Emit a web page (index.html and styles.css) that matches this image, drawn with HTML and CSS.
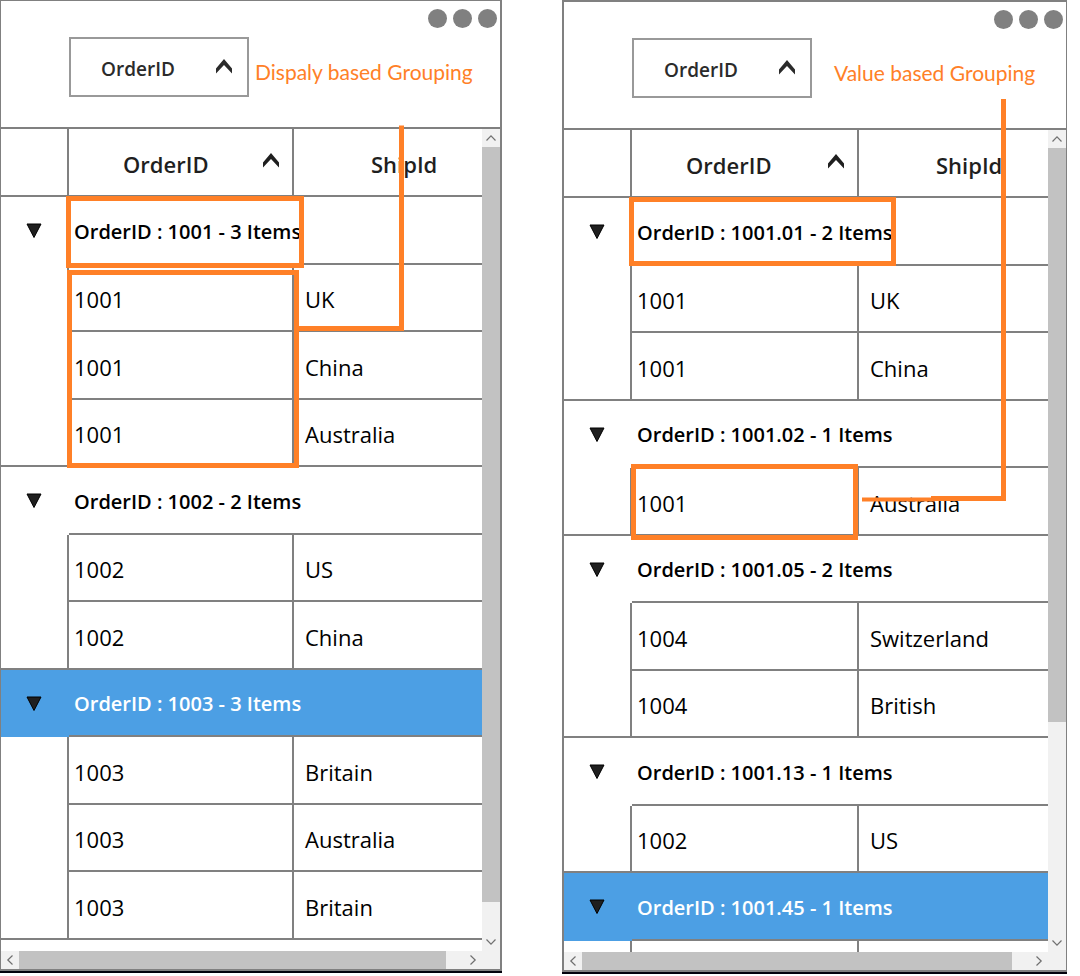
FILE: index.html
```html
<!DOCTYPE html>
<html lang="en">
<head>
<meta charset="utf-8">
<title>Grouping modes</title>
<link rel="stylesheet" href="styles.css">
</head>
<body>
<svg class="defs" aria-hidden="true">
  <symbol id="sort" viewBox="0 0 18 15"><path d="M9 0 17 9.500V14.500L9 6 1 14.500V9.500Z" fill="currentColor"/></symbol>
  <symbol id="expanded" viewBox="0 0 16 16"><path d="M1 1H15L8 14.500Z" fill="currentColor" stroke="#000" stroke-width="1"/></symbol>
  <symbol id="arrow" viewBox="0 0 18 18"><path d="M4.500 11.500 9 6.800 13.500 11.500" fill="none" stroke="#707070" stroke-width="1.200"/></symbol>
</svg>
<main class="page">
  <section class="panel panel-display">
    <header class="group-area">
      <button class="chip" type="button">OrderID<svg class="sort-icon"><use href="#sort"/></svg></button>
      <p class="caption">Dispaly based Grouping</p>
      <button class="more" type="button" aria-label="More"><span class="dot"></span><span class="dot"></span><span class="dot"></span></button>
    </header>
    <div class="viewport">
      <table class="grid">
        <thead>
          <tr><th class="gutter"></th><th class="key"><button class="sorter" type="button">OrderID<svg class="sort-icon"><use href="#sort"/></svg></button></th><th class="ship">ShipId</th></tr>
        </thead>
        <tbody>
          <tr class="group"><td><button class="expander" type="button" aria-label="Collapse"><svg class="expand-icon"><use href="#expanded"/></svg></button></td><td colspan="2">OrderID : 1001 - 3 Items</td></tr>
          <tr><td></td><td>1001</td><td>UK</td></tr>
          <tr><td></td><td>1001</td><td>China</td></tr>
          <tr class="last"><td></td><td>1001</td><td>Australia</td></tr>
          <tr class="group"><td><button class="expander" type="button" aria-label="Collapse"><svg class="expand-icon"><use href="#expanded"/></svg></button></td><td colspan="2">OrderID : 1002 - 2 Items</td></tr>
          <tr><td></td><td>1002</td><td>US</td></tr>
          <tr class="last"><td></td><td>1002</td><td>China</td></tr>
          <tr class="group selected"><td><button class="expander" type="button" aria-label="Collapse"><svg class="expand-icon"><use href="#expanded"/></svg></button></td><td colspan="2">OrderID : 1003 - 3 Items</td></tr>
          <tr><td></td><td>1003</td><td>Britain</td></tr>
          <tr><td></td><td>1003</td><td>Australia</td></tr>
          <tr class="last"><td></td><td>1003</td><td>Britain</td></tr>
        </tbody>
      </table>
    </div>
    <div class="bar bar-y">
      <button class="step" type="button" aria-label="Scroll up"><svg class="arrow"><use href="#arrow"/></svg></button>
      <div class="track"><div class="thumb" style="height: 96%"></div></div>
      <button class="step" type="button" aria-label="Scroll down"><svg class="arrow down"><use href="#arrow"/></svg></button>
    </div>
    <div class="bar bar-x">
      <button class="step" type="button" aria-label="Scroll left"><svg class="arrow left"><use href="#arrow"/></svg></button>
      <div class="track"><div class="thumb" style="width: 96%"></div></div>
      <button class="step" type="button" aria-label="Scroll right"><svg class="arrow right"><use href="#arrow"/></svg></button>
    </div>
    <div class="corner"></div>
    <svg class="marks" viewBox="0 0 500 520" width="500" height="520" aria-hidden="true">
      <rect x="67.500" y="197.500" width="233" height="67"/>
      <rect x="68.500" y="271.500" width="227" height="193"/>
      <path d="M400.500 124.500V327.500H295.500"/>
    </svg>
  </section>
  <section class="panel panel-value">
    <header class="group-area">
      <button class="chip" type="button">OrderID<svg class="sort-icon"><use href="#sort"/></svg></button>
      <p class="caption">Value based Grouping</p>
      <button class="more" type="button" aria-label="More"><span class="dot"></span><span class="dot"></span><span class="dot"></span></button>
    </header>
    <div class="viewport">
      <table class="grid">
        <thead>
          <tr><th class="gutter"></th><th class="key"><button class="sorter" type="button">OrderID<svg class="sort-icon"><use href="#sort"/></svg></button></th><th class="ship">ShipId</th></tr>
        </thead>
        <tbody>
          <tr class="group"><td><button class="expander" type="button" aria-label="Collapse"><svg class="expand-icon"><use href="#expanded"/></svg></button></td><td colspan="2">OrderID : 1001.01 - 2 Items</td></tr>
          <tr><td></td><td>1001</td><td>UK</td></tr>
          <tr class="last"><td></td><td>1001</td><td>China</td></tr>
          <tr class="group"><td><button class="expander" type="button" aria-label="Collapse"><svg class="expand-icon"><use href="#expanded"/></svg></button></td><td colspan="2">OrderID : 1001.02 - 1 Items</td></tr>
          <tr class="last"><td></td><td>1001</td><td>Australia</td></tr>
          <tr class="group"><td><button class="expander" type="button" aria-label="Collapse"><svg class="expand-icon"><use href="#expanded"/></svg></button></td><td colspan="2">OrderID : 1001.05 - 2 Items</td></tr>
          <tr><td></td><td>1004</td><td>Switzerland</td></tr>
          <tr class="last"><td></td><td>1004</td><td>British</td></tr>
          <tr class="group"><td><button class="expander" type="button" aria-label="Collapse"><svg class="expand-icon"><use href="#expanded"/></svg></button></td><td colspan="2">OrderID : 1001.13 - 1 Items</td></tr>
          <tr class="last"><td></td><td>1002</td><td>US</td></tr>
          <tr class="group selected"><td><button class="expander" type="button" aria-label="Collapse"><svg class="expand-icon"><use href="#expanded"/></svg></button></td><td colspan="2">OrderID : 1001.45 - 1 Items</td></tr>
          <tr class="last"><td></td><td></td><td></td></tr>
        </tbody>
      </table>
    </div>
    <div class="bar bar-y">
      <button class="step" type="button" aria-label="Scroll up"><svg class="arrow"><use href="#arrow"/></svg></button>
      <div class="track"><div class="thumb" style="height: 73%"></div></div>
      <button class="step" type="button" aria-label="Scroll down"><svg class="arrow down"><use href="#arrow"/></svg></button>
    </div>
    <div class="bar bar-x">
      <button class="step" type="button" aria-label="Scroll left"><svg class="arrow left"><use href="#arrow"/></svg></button>
      <div class="track"><div class="thumb" style="width: 96%"></div></div>
      <button class="step" type="button" aria-label="Scroll right"><svg class="arrow right"><use href="#arrow"/></svg></button>
    </div>
    <div class="corner"></div>
    <svg class="marks" viewBox="0 0 500 560" width="500" height="560" aria-hidden="true">
      <rect x="67.500" y="197.500" width="262" height="64"/>
      <rect x="69.500" y="464.500" width="222" height="71"/>
      <path d="M439.500 97V496.500H367"/>
      <path d="M298 497.500H371" stroke-width="4"/>
    </svg>
  </section>
</main>
</body>
</html>
```
FILE: styles.css
```css
* {
  box-sizing: border-box;
}

body {
  margin: 0;
  background: #fff;
  color: #000;
  font-family: "Open Sans", "Noto Sans", sans-serif;
  font-size: 22px;
  line-height: 30px;
}

button {
  padding: 0;
  border: 0;
  background: none;
  color: inherit;
  font: inherit;
}

svg {
  display: block;
}

.defs {
  display: none;
}

.page {
  display: grid;
  grid-template-columns: 502fr 505fr;
  grid-template-rows: minmax(0, 1fr);
  column-gap: 60px;
  height: 100vh;
  padding: 0 13px 4px 0;
}

.panel {
  position: relative;
  display: grid;
  grid-template-columns: minmax(0, 1fr) 18px;
  grid-template-rows: auto minmax(0, 1fr) 18px;
  border: solid #808080;
  box-shadow: 0 2px 0 #02020c;
}

.panel-display {
  margin-bottom: 1px;
  border-width: 1px 2px 2px 1px;
}

.panel-value {
  border-width: 2px 1px 2px 2px;
}

.group-area {
  grid-column: 1 / -1;
  display: flex;
  align-items: flex-start;
  height: 128px;
  border-bottom: 2px solid #808080;
}

.chip {
  display: flex;
  align-items: center;
  justify-content: space-between;
  width: 180px;
  height: 60px;
  margin: 36px 0 0 68px;
  padding: 4px 14px 0 30px;
  border: 2px solid #999;
  color: #2b2b2b;
  font-size: 19px;
  font-weight: 600;
}

.sort-icon {
  width: 18px;
  height: 15px;
  margin-bottom: 6px;
}

.caption {
  margin: 56px 0 0 6px;
  color: #ff8027;
  font-family: Lato, "Open Sans", sans-serif;
  font-size: 21px;
  white-space: nowrap;
}

.panel-value .caption {
  margin-left: 22px;
}

.more {
  position: absolute;
  top: 8px;
  right: 3px;
  display: flex;
  gap: 6px;
}

.dot {
  width: 19px;
  height: 19px;
  border-radius: 50%;
  background: #808080;
}

.viewport {
  overflow: hidden;
}

.grid {
  width: 100%;
  table-layout: fixed;
  border-collapse: separate;
  border-spacing: 0;
}

.grid th,
.grid td {
  padding: 3px 0 0 11px;
  border: 0 solid #808080;
  text-align: left;
  white-space: nowrap;
}

.grid th {
  height: 68px;
  border-bottom-width: 2px;
  color: #1f1f1f;
  font-weight: 600;
}

.grid .gutter {
  width: 68px;
  border-right-width: 2px;
}

.grid .key {
  width: 225px;
  padding-left: 54px;
  border-right-width: 2px;
}

.panel-value .grid .key {
  width: 227px;
}

.grid .ship {
  padding-left: 77px;
}

.sorter {
  display: flex;
  align-items: center;
  justify-content: space-between;
  width: 100%;
  padding-right: 12px;
}

.grid tbody tr {
  height: 67px;
}

.grid tbody tr:nth-child(odd) {
  height: 68px;
}

.grid td:nth-child(2) {
  padding-left: 5px;
  border-width: 0 2px 2px 0;
}

.grid td:nth-child(3) {
  border-bottom-width: 2px;
}

.grid td:first-child {
  padding: 0;
  border-right-width: 2px;
}

.grid .last td:first-child {
  border-bottom-width: 2px;
}

.grid .group td:first-child {
  border-right-width: 0;
}

.grid .group td:nth-child(2) {
  border-right-width: 0;
  font-size: 20px;
  font-weight: 600;
}

.grid .selected td {
  background: #4c9fe4;
  color: #fff;
}

.expander {
  display: block;
  margin-left: 25px;
  color: #1f1f1f;
}

.expand-icon {
  width: 16px;
  height: 16px;
}

.bar {
  display: flex;
  background: #f1f1f1;
}

.bar-y {
  flex-direction: column;
}

.track {
  flex: 1;
}

.thumb {
  width: 100%;
  height: 100%;
  background: #c2c2c2;
}

.arrow {
  width: 18px;
  height: 18px;
}

.down {
  transform: rotate(180deg);
}

.left {
  transform: rotate(-90deg);
}

.right {
  transform: rotate(90deg);
}

.corner {
  background: #f1f1f1;
}

.marks {
  position: absolute;
  top: 0;
  left: 0;
  fill: none;
  stroke: #ff8027;
  stroke-width: 5px;
  pointer-events: none;
}
```
